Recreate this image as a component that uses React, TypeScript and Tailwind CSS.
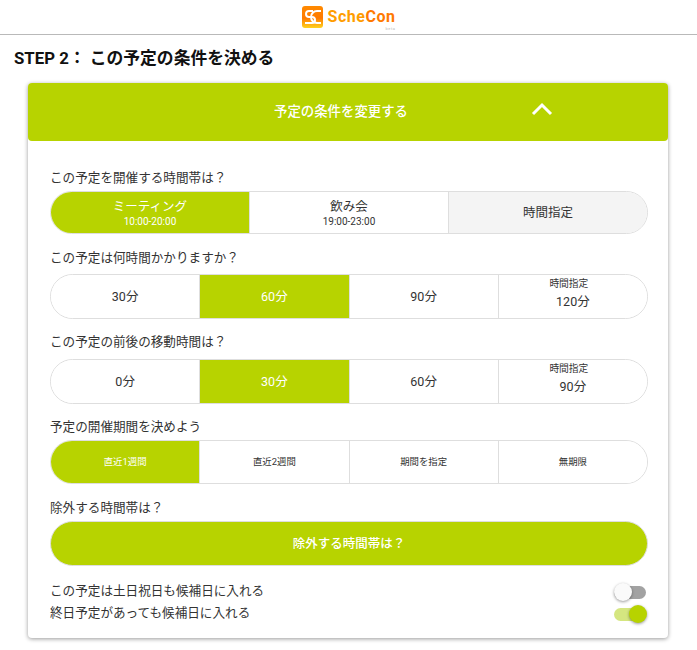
import React from "react";

const font = { fontFamily: "Roboto, 'Noto Sans CJK JP', sans-serif" };

type Seg = { label: string; sub?: string; top?: string; on?: boolean; gray?: boolean };

function Segments({ items, h, small }: { items: Seg[]; h: string; small?: boolean }) {
  return (
    <div className={`flex w-[598px] rounded-[24px] overflow-hidden border border-[#dedede] ${h}`}>
      {items.map((item, i) => (
        <div
          key={item.label}
          className={`flex-1 flex flex-col items-center justify-center ${i > 0 ? "border-l border-[#dedede]" : ""} ${item.on ? "bg-[#b7d300] text-white" : item.gray ? "bg-[#f4f4f4] text-[#333]" : "bg-white text-[#333]"}`}
        >
          {item.top && <span className="text-[9.75px] leading-[12px] mt-[-6px] mb-[3px] mr-[8px]">{item.top}</span>}
          <span className={small ? "text-[9.4px] leading-[14px]" : "text-[12.5px] leading-[17px]"}>{item.label}</span>
          {item.sub && <span className="text-[10px] leading-[13px]">{item.sub}</span>}
        </div>
      ))}
    </div>
  );
}

function Label({ children, mt }: { children: React.ReactNode; mt: string }) {
  return <p className={`text-[12.6px] leading-[18px] text-[#333] ${mt}`}>{children}</p>;
}

function Toggle({ on }: { on?: boolean }) {
  return (
    <div className="relative w-[32px] h-[13px]">
      <div className={`w-full h-full rounded-full ${on ? "bg-[#d5e680]" : "bg-[#a2a2a2]"}`} />
      <div
        className={`absolute top-[-3px] w-[18px] h-[18px] rounded-full shadow-[0_1px_3px_rgba(0,0,0,0.4)] ${on ? "right-[-1px] bg-[#b7d300]" : "left-0 bg-[#fafafa]"}`}
      />
    </div>
  );
}

function Logo() {
  return (
    <svg width="21" height="22" viewBox="0 0 21 22">
      <defs>
        <linearGradient id="logoFill" x1="0" y1="0" x2="0" y2="1">
          <stop offset="0" stopColor="#ff8a00" />
          <stop offset="0.55" stopColor="#ff7a00" />
          <stop offset="1" stopColor="#ffd21e" />
        </linearGradient>
      </defs>
      <rect width="21" height="22" rx="3" fill="url(#logoFill)" />
      <path d="M11 5H7a3 3 0 0 0 0 6h3a3 3 0 0 1 0 6H3" fill="none" stroke="#fff" strokeWidth="2" />
      <path d="M19 5h-4a6 6 0 0 0 0 12h4" fill="none" stroke="#fff" strokeWidth="2" />
    </svg>
  );
}

export default function App() {
  return (
    <div style={font} className="w-[697px] h-[650px] bg-white overflow-hidden">
      <header className="h-[35px] border-b border-[#b9b9b9] flex items-center justify-center gap-[5px] pb-[1px]">
        <Logo />
        <span className="relative text-[16px] font-bold tracking-[0.5px] text-[#ff9d00]">
          Sche<span className="text-[#ff7a00]">Con</span>
          <span className="absolute right-0 bottom-[-2px] text-[4px] leading-[5px] font-normal text-[#bbb]">beta</span>
        </span>
      </header>
      <h1 className="mt-[11px] ml-[14px] text-[16.8px] leading-[24px] font-bold text-[#111]">STEP 2： この予定の条件を決める</h1>

      <div className="mt-[13px] ml-[28px] w-[640px] h-[555px] bg-white rounded-[4px] shadow-[0_1px_4px_rgba(0,0,0,0.4)]">
        <div className="relative h-[58px] bg-[#b7d300] rounded-[4px] flex items-center justify-center text-white text-[13.4px] font-medium pr-[14px] pt-[1px]">
          予定の条件を変更する
          <svg className="absolute left-[502px] top-[18px]" width="24" height="16" viewBox="0 0 24 16">
            <path d="M3 13 12 4l9 9" fill="none" stroke="#fff" strokeWidth="3" />
          </svg>
        </div>

        <div className="px-[22px]">
          <Label mt="mt-[28px]">この予定を開催する時間帯は？</Label>
          <div className="mt-[4px]">
            <Segments
              h="h-[43px]"
              items={[
                { label: "ミーティング", sub: "10:00-20:00", on: true },
                { label: "飲み会", sub: "19:00-23:00" },
                { label: "時間指定", gray: true },
              ]}
            />
          </div>

          <Label mt="mt-[15px]">この予定は何時間かかりますか？</Label>
          <div className="mt-[7px]">
            <Segments
              h="h-[45px]"
              items={[
                { label: "30分" },
                { label: "60分", on: true },
                { label: "90分" },
                { label: "120分", top: "時間指定" },
              ]}
            />
          </div>

          <Label mt="mt-[14px]">この予定の前後の移動時間は？</Label>
          <div className="mt-[8px]">
            <Segments
              h="h-[45px]"
              items={[
                { label: "0分" },
                { label: "30分", on: true },
                { label: "60分" },
                { label: "90分", top: "時間指定" },
              ]}
            />
          </div>

          <Label mt="mt-[14px]">予定の開催期間を決めよう</Label>
          <div className="mt-[4px]">
            <Segments
              small
              h="h-[44px]"
              items={[
                { label: "直近1週間", on: true },
                { label: "直近2週間" },
                { label: "期間を指定" },
                { label: "無期限" },
              ]}
            />
          </div>

          <Label mt="mt-[15px]">除外する時間帯は？</Label>
          <div className="mt-[4px] w-[598px] h-[45px] rounded-[24px] bg-[#b7d300] border border-[#dedede] flex items-center justify-center text-white text-[12.5px] font-medium pt-[1px]">
            除外する時間帯は？
          </div>

          <div className="mt-[17px] flex items-center justify-between h-[18px]">
            <span className="text-[12.6px] text-[#333] pb-[2px]">この予定は土日祝日も候補日に入れる</span>
            <Toggle />
          </div>
          <div className="mt-[4px] flex items-center justify-between h-[18px]">
            <span className="text-[12.6px] text-[#333] pb-[2px]">終日予定があっても候補日に入れる</span>
            <Toggle on />
          </div>
        </div>
      </div>
    </div>
  );
}
